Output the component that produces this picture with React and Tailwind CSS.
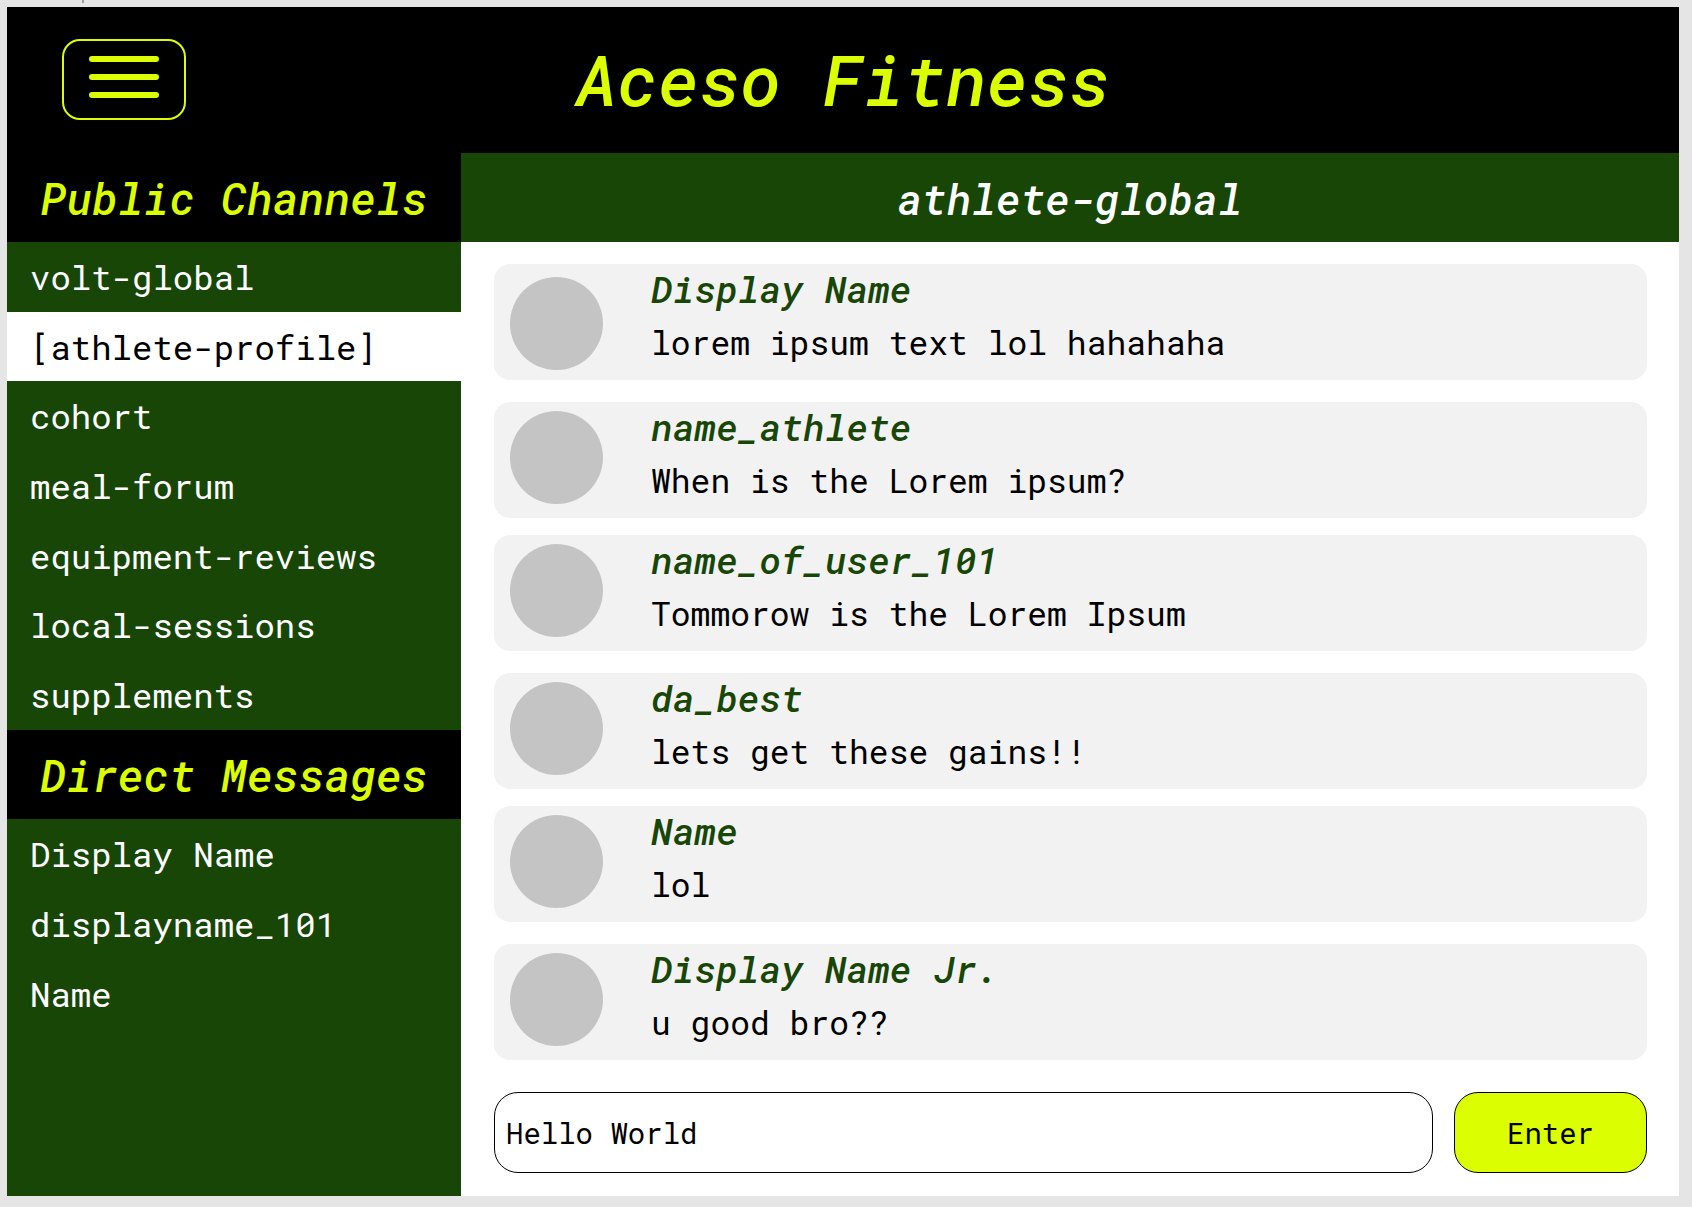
const channels = [
  'volt-global',
  '[athlete-profile]',
  'cohort',
  'meal-forum',
  'equipment-reviews',
  'local-sessions',
  'supplements',
];

const directMessages = ['Display Name', 'displayname_101', 'Name'];

const messages = [
  { name: 'Display Name', text: 'lorem ipsum text lol hahahaha' },
  { name: 'name_athlete', text: 'When is the Lorem ipsum?' },
  { name: 'name_of_user_101', text: 'Tommorow is the Lorem Ipsum' },
  { name: 'da_best', text: 'lets get these gains!!' },
  { name: 'Name', text: 'lol' },
  { name: 'Display Name Jr.', text: 'u good bro??' },
];

function SidebarHeading({ children }) {
  return (
    <h2 className="flex h-[89px] shrink-0 items-center justify-center whitespace-nowrap bg-black text-[44px] leading-none font-medium italic text-[#dbff00]">
      {children}
    </h2>
  );
}

function SidebarItem({ label, active }) {
  return (
    <li className="flex flex-1">
      <a
        href="#"
        aria-current={active ? 'page' : undefined}
        className={
          active
            ? 'flex flex-1 items-center bg-white pl-[23px] text-black'
            : 'flex flex-1 items-center pl-[23px] text-white'
        }
      >
        {label}
      </a>
    </li>
  );
}

function Message({ name, text, first, tight }) {
  return (
    <li
      className={
        'flex h-[116px] items-start gap-12 rounded-2xl bg-[#f2f2f2] pl-4 ' +
        (first ? '' : tight ? 'mt-[17px]' : 'mt-[22px]')
      }
    >
      <span
        className={
          'size-[93px] shrink-0 rounded-full bg-[#c4c4c4] ' + (first ? 'mt-[13px]' : 'mt-[9px]')
        }
      />
      <div className="min-w-0 whitespace-nowrap">
        <h3 className="text-[37px] leading-[50px] font-medium italic text-[#174607]">{name}</h3>
        <p className="text-[33px] leading-[56px] text-black">{text}</p>
      </div>
    </li>
  );
}

export default function App() {
  return (
    <div className="relative flex min-h-screen flex-col bg-[#e5e5e5] pt-[7px] pr-[13px] pb-[11px] pl-[7px] font-['Roboto_Mono','DejaVu_Sans_Mono',monospace]">
      <span className="absolute top-0 left-[82px] h-[3px] w-0.5 bg-[#9c9c9c]" />

      <header className="grid h-[146px] shrink-0 grid-cols-[1fr_auto_1fr] items-center bg-black pb-0.5">
        <button
          type="button"
          aria-label="Menu"
          className="ml-[55px] flex h-[81px] w-[124px] flex-col items-center gap-3 justify-self-start rounded-[18px] border-2 border-[#dbff00] pt-[15px]"
        >
          <span className="h-1.5 w-[70px] rounded-full bg-[#dbff00]" />
          <span className="h-1.5 w-[70px] rounded-full bg-[#dbff00]" />
          <span className="h-1.5 w-[70px] rounded-full bg-[#dbff00]" />
        </button>
        <h1 className="whitespace-nowrap text-[70px] leading-none font-medium italic text-[#dbff00]">
          Aceso Fitness
        </h1>
      </header>

      <div className="flex flex-1">
        <nav className="flex w-[454px] shrink-0 flex-col bg-[#174607]">
          <SidebarHeading>Public Channels</SidebarHeading>
          <ul className="flex min-h-[488px] flex-col text-[34px] leading-none">
            {channels.map((c) => (
              <SidebarItem key={c} label={c} active={c === '[athlete-profile]'} />
            ))}
          </ul>
          <SidebarHeading>Direct Messages</SidebarHeading>
          <ul className="flex min-h-[210px] flex-col text-[34px] leading-none">
            {directMessages.map((d) => (
              <SidebarItem key={d} label={d} />
            ))}
          </ul>
        </nav>

        <main className="flex min-w-0 flex-1 flex-col bg-white">
          <h2 className="flex h-[89px] shrink-0 items-center justify-center bg-[#174607] pt-0.5 text-[42px] leading-none font-medium italic text-white">
            athlete-global
          </h2>
          <div className="flex flex-1 flex-col pt-[22px] pr-8 pb-[23px] pl-[33px]">
            <ul>
              {messages.map((m, i) => (
                <Message key={m.name} {...m} first={i === 0} tight={i % 2 === 0} />
              ))}
            </ul>
            <form
              className="mt-auto flex gap-[21px] text-[29px]"
              onSubmit={(e) => e.preventDefault()}
            >
              <input
                type="text"
                aria-label="Message"
                defaultValue="Hello World"
                className="h-[81px] min-w-0 flex-1 rounded-3xl border border-black bg-white pl-[11px] text-black outline-none"
              />
              <button
                type="submit"
                className="h-[81px] w-[193px] rounded-3xl border border-black bg-[#dbff00] pt-0.5 text-black"
              >
                Enter
              </button>
            </form>
          </div>
        </main>
      </div>
    </div>
  );
}
